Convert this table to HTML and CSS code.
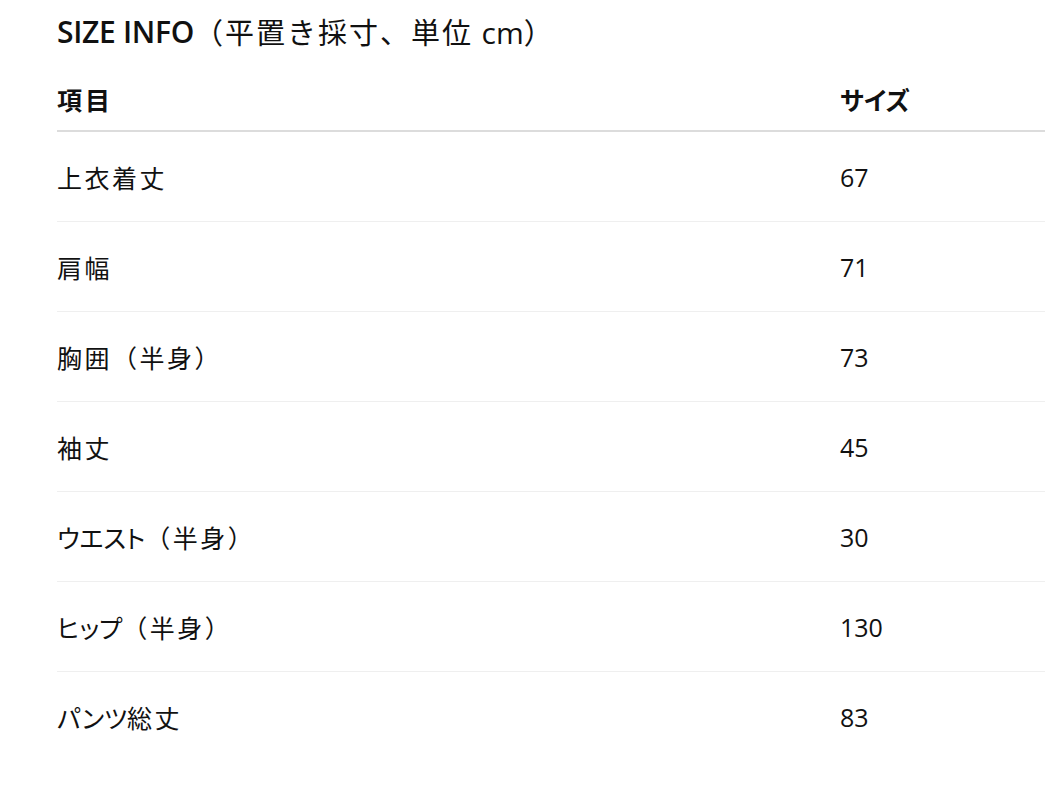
FILE: index.html
```html
<!DOCTYPE html>
<html lang="ja">
<head>
<meta charset="utf-8">
<link rel="stylesheet" href="styles.css">
</head>
<body>
<div class="page">
  <h1 class="title"><span class="title-lat">SIZE INFO</span><span class="title-cjk">（平置き採寸、単位 <span class="cm">cm</span>）</span></h1>
  <div class="table">
    <div class="row head">
      <div class="cell label">項目</div>
      <div class="cell label"><span class="kana">サイズ</span></div>
    </div>
    <div class="row">
      <div class="cell label">上衣着丈</div>
      <div class="cell num">67</div>
    </div>
    <div class="row">
      <div class="cell label">肩幅</div>
      <div class="cell num">71</div>
    </div>
    <div class="row">
      <div class="cell label">胸囲（半身）</div>
      <div class="cell num">73</div>
    </div>
    <div class="row">
      <div class="cell label">袖丈</div>
      <div class="cell num">45</div>
    </div>
    <div class="row">
      <div class="cell label"><span class="kana">ウエスト</span>（半身）</div>
      <div class="cell num">30</div>
    </div>
    <div class="row">
      <div class="cell label"><span class="kana">ヒップ</span>（半身）</div>
      <div class="cell num">130</div>
    </div>
    <div class="row last">
      <div class="cell label"><span class="kana">パンツ</span>総丈</div>
      <div class="cell num">83</div>
    </div>
  </div>
</div>
</body>
</html>
```

FILE: styles.css
```css
html, body {
  margin: 0;
  padding: 0;
  background: #fff;
}

body {
  color: #111;
  font-family: "Open Sans", "Noto Sans CJK JP", sans-serif;
  overflow: hidden;
}

.page {
  padding-left: 57px;
}

.title {
  margin: 0;
  height: 70px;
  display: flex;
  align-items: center;
  padding-bottom: 7px;
  box-sizing: border-box;
  font-weight: 400;
  white-space: nowrap;
}

.title-lat {
  font-family: "Open Sans", sans-serif;
  font-size: 30px;
  font-weight: 600;
  letter-spacing: -0.3px;
}

.title-cjk {
  font-family: "Noto Sans CJK JP", sans-serif;
  font-size: 29px;
  letter-spacing: 2px;
}

.title-cjk .cm {
  font-family: "Open Sans", sans-serif;
  font-size: 30px;
  letter-spacing: 0;
}

.table {
  display: flex;
  flex-direction: column;
}

.row {
  display: grid;
  grid-template-columns: 783px 1fr;
  height: 90px;
  box-sizing: border-box;
  align-items: center;
  border-bottom: 1px solid #efefef;
}

.row.head {
  height: 62px;
  border-bottom: 2px solid #dcdcdc;
  padding-bottom: 2px;
}

.row.last {
  border-bottom: none;
}

.cell {
  white-space: nowrap;
}

.label {
  font-family: "Noto Sans CJK JP", sans-serif;
  font-size: 25px;
  letter-spacing: 2.5px;
  font-weight: 400;
}

.kana {
  font-feature-settings: "palt";
  letter-spacing: 0;
}

.head .label {
  font-weight: 700;
  letter-spacing: 3px;
}

.head .kana {
  letter-spacing: 0;
}

.num {
  font-family: "Open Sans", sans-serif;
  font-size: 25px;
}
```
